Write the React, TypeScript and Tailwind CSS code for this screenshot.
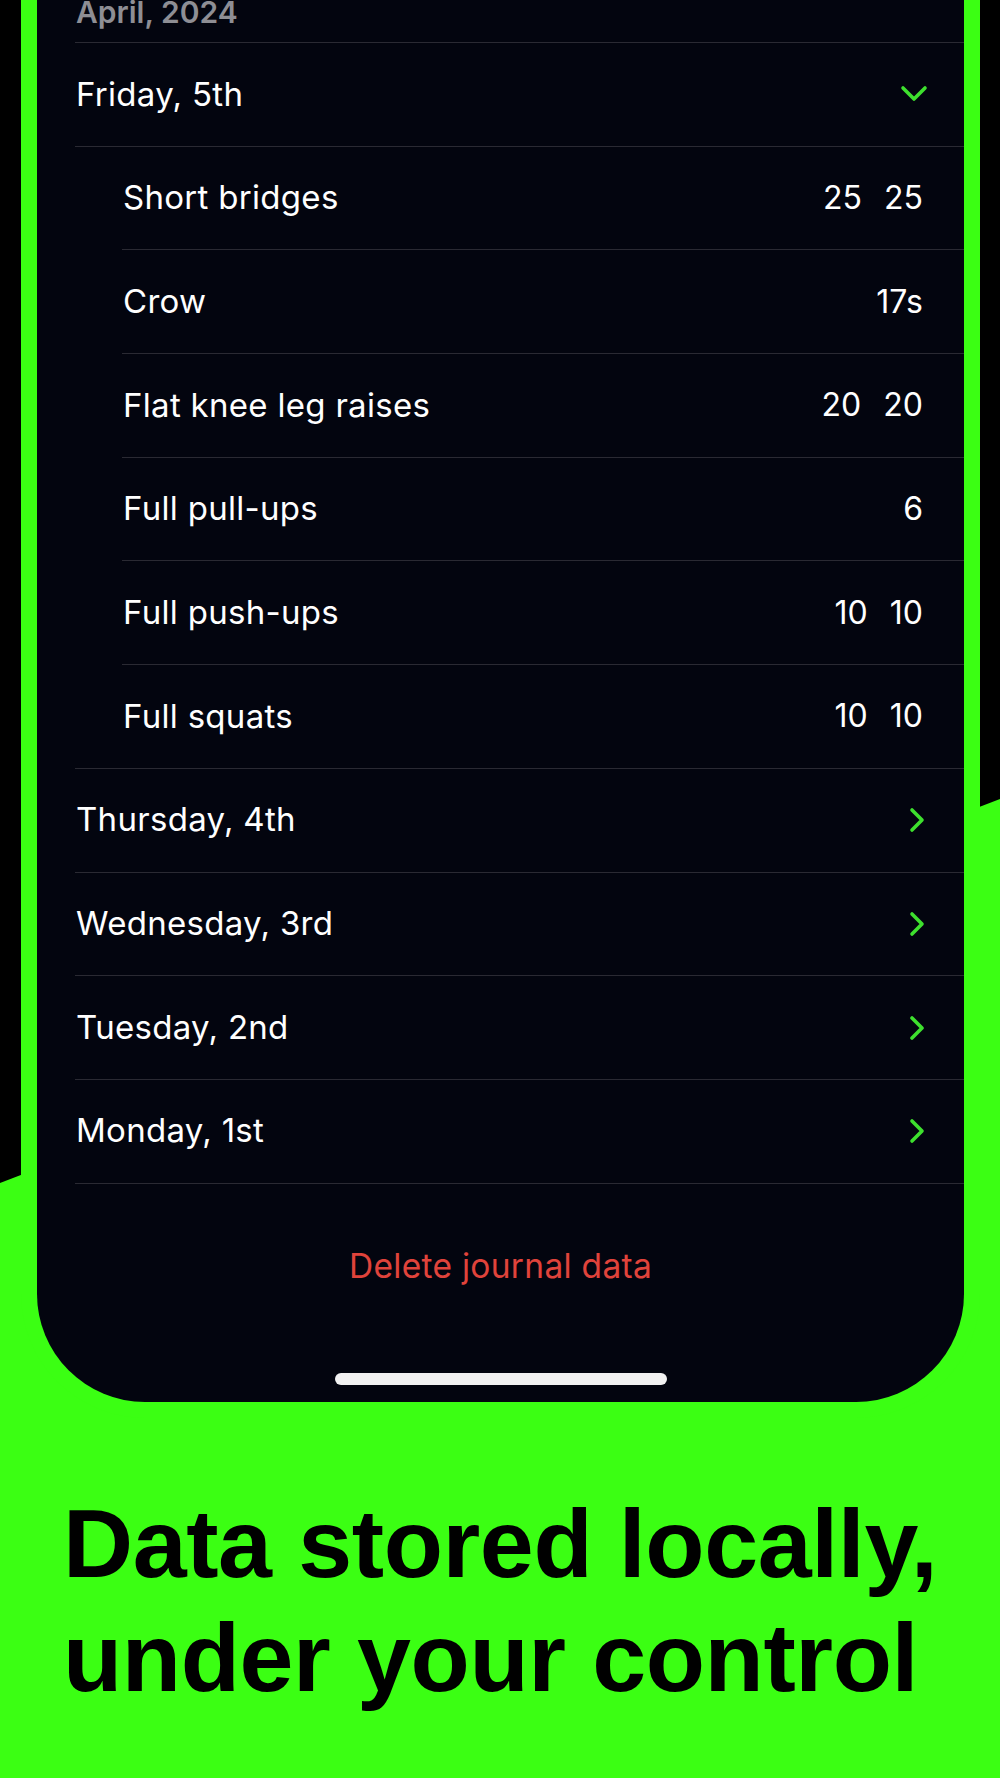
import React from "react";

// ── Journal data ──────────────────────────────────────────────────────

type Entry = { name: string; values: string[] };

const FRIDAY: Entry[] = [
  { name: "Short bridges", values: ["25", "25"] },
  { name: "Crow", values: ["17s"] },
  { name: "Flat knee leg raises", values: ["20", "20"] },
  { name: "Full pull-ups", values: ["6"] },
  { name: "Full push-ups", values: ["10", "10"] },
  { name: "Full squats", values: ["10", "10"] },
];

const OTHER_DAYS = ["Thursday, 4th", "Wednesday, 3rd", "Tuesday, 2nd", "Monday, 1st"];

const font = "font-['Inter','Noto_Sans',sans-serif]";

function ChevronRight() {
  return (
    <svg width="18" height="26" viewBox="0 0 18 26" className="shrink-0">
      <polyline
        points="4,3 14,13 4,23"
        fill="none"
        stroke="#3ee02e"
        strokeWidth="3.6"
        strokeLinecap="round"
        strokeLinejoin="round"
      />
    </svg>
  );
}

function ChevronDown() {
  return (
    <svg width="28" height="18" viewBox="0 0 28 18" className="shrink-0">
      <polyline
        points="3,3 14,14 25,3"
        fill="none"
        stroke="#3ee02e"
        strokeWidth="3.6"
        strokeLinecap="round"
        strokeLinejoin="round"
      />
    </svg>
  );
}

export default function App() {
  return (
    <div className="relative w-[1000px] h-[1778px] overflow-hidden bg-[#3bff13]">
      {/* tilted black backdrop behind the phone */}
      <svg className="absolute inset-0" width="1000" height="1778" viewBox="0 0 1000 1778">
        <polygon points="0,0 1000,0 1000,799 0,1183" fill="#000" />
      </svg>

      {/* Phone body (green bezel) */}
      <div className="relative z-10 ml-[21px] w-[959px] px-[16px] pb-[16px] rounded-b-[124px] bg-[#3bff13]">
        {/* Screen */}
        <div
          className={`w-[927px] h-[1402px] rounded-b-[108px] bg-[#03050f] overflow-hidden text-white tracking-[0.3px] ${font}`}
        >
          {/* Month header */}
          <div className="h-[43px] ml-[38px] flex items-end pb-[15px] border-b border-[#2a2a33]">
            <span className="pl-[1px] text-[30px] leading-[30px] font-semibold tracking-normal text-[#8e8e94]">
              April, 2024
            </span>
          </div>

          {/* Friday (expanded) */}
          <div className="h-[103.7px] ml-[38px] pr-[36px] flex items-center justify-between border-b border-[#2a2a33]">
            <span className="pl-[1px] text-[33px]">Friday, 5th</span>
            <ChevronDown />
          </div>

          {FRIDAY.map((e, i) => {
            const last = i === FRIDAY.length - 1;
            return (
              <div
                key={e.name}
                className={
                  last
                    ? "h-[103.7px] ml-[38px] pl-[47px] pr-[41px] flex items-center justify-between border-b border-[#2a2a33]"
                    : "h-[103.7px] ml-[85px] pr-[41px] flex items-center justify-between border-b border-[#2a2a33]"
                }
              >
                <span className="pl-[1px] text-[33px]">{e.name}</span>
                <div className="flex gap-[22px] text-[32px] tracking-normal">
                  {e.values.map((v, j) => (
                    <span key={j}>{v}</span>
                  ))}
                </div>
              </div>
            );
          })}

          {OTHER_DAYS.map(d => (
            <div
              key={d}
              className="h-[103.7px] ml-[38px] pr-[38px] flex items-center justify-between border-b border-[#2a2a33]"
            >
              <span className="pl-[1px] text-[33px]">{d}</span>
              <ChevronRight />
            </div>
          ))}

          {/* Delete action + home indicator */}
          <div className="flex flex-col items-center">
            <button className="mt-[62px] h-[40px] text-[33.5px] leading-[40px] text-[#e0433b]">
              Delete journal data
            </button>
            <div className="mt-[87px] w-[332px] h-[12px] rounded-full bg-[#f2f2f2]" />
          </div>
        </div>
      </div>

      {/* Headline */}
      <h1 className="relative z-10 mt-[69px] ml-[63px] font-['Liberation_Sans','Arial',sans-serif] font-bold text-[97px] leading-[114px] tracking-[-0.4px] text-black">
        Data stored locally,
        <br />
        under your control
      </h1>
    </div>
  );
}
